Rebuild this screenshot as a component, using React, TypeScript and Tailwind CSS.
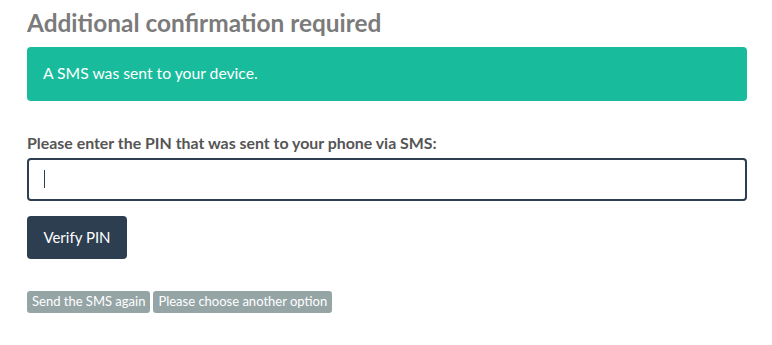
const App = () => {
  return (
    <div className="min-h-screen bg-white px-[27px] pt-[6px] font-['Lato','Noto_Sans',sans-serif] text-[15.7px] text-[#2c3e50]">
      <div className="w-[720px]">
        {/* Heading */}
        <h3 className="text-[24.4px] font-bold leading-[34px] text-[#7b7b7b]">Additional confirmation required</h3>

        {/* Alert */}
        <div className="mt-[7px] h-[54px] rounded-[4px] bg-[#18bc9c] px-[16px] flex items-center text-white">
          A SMS was sent to your device.
        </div>

        {/* PIN form */}
        <form className="mt-[32px]" onSubmit={(e) => e.preventDefault()}>
          <label className="block text-[15.9px] font-bold leading-[20px] text-[#555555]">
            Please enter the PIN that was sent to your phone via SMS:
          </label>
          <div className="relative mt-[5px]">
            <input
              type="text"
              className="block h-[43px] w-full rounded-[4px] border-2 border-[#2c3e50] px-[15px] text-[16px] outline-none"
            />
            {/* caret of the focused field */}
            <span className="absolute left-[17px] top-[12px] h-[18px] w-px bg-[#2c3e50]"></span>
          </div>
          <button
            type="submit"
            className="mt-[15px] h-[43px] w-[100px] rounded-[4px] bg-[#2c3e50] text-[15px] text-white"
          >
            Verify PIN
          </button>
        </form>

        {/* Other options */}
        <div className="mt-[32px] flex gap-[3px]">
          <button className="h-[22px] rounded-[3px] bg-[#95a5a6] px-[5px] text-[13px] text-white">
            Send the SMS again
          </button>
          <button className="h-[22px] rounded-[3px] bg-[#95a5a6] px-[5px] text-[13px] text-white">
            Please choose another option
          </button>
        </div>
      </div>
    </div>
  );
};

export default App;
